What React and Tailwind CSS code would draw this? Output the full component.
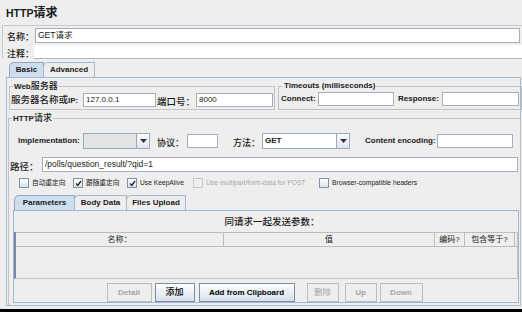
import React from 'react';

const FONT = "font-['Liberation_Sans','Noto_Sans_CJK_SC',sans-serif]";

const Cjk = ({ children, size = 'text-[9.5px]' }) => <span className={`${size} font-medium`}>{children}</span>;

const Field = ({ w, value, className = '' }) => (
  <div className={`h-[14px] shrink-0 border border-[#a3afbc] bg-white flex items-center pl-[2px] text-[8px] ${w} ${className}`}>
    {value}
  </div>
);

const Arrow = () => (
  <svg width="7" height="4" viewBox="0 0 7 4"><path d="M0 0h7L3.5 4z" fill="#333" /></svg>
);

const Combo = ({ w, value, disabled }) => (
  <div className={`h-[16px] shrink-0 flex border border-[#9aa9b8] ${w}`}>
    <div className={`flex-1 flex items-center pl-[2px] text-[8px] font-bold ${disabled ? 'bg-[#e3e3e3]' : 'bg-white'}`}>{value}</div>
    <div className="w-[13px] border-l border-[#9aa9b8] bg-gradient-to-b from-[#fafbfd] to-[#dfe6ee] flex items-center justify-center">
      <Arrow />
    </div>
  </div>
);

const Check = ({ checked, disabled, label, className = '' }) => (
  <div className={`flex items-center gap-[3px] shrink-0 ${className}`}>
    <div className={`w-[10px] h-[10px] border flex items-center justify-center ${disabled ? 'border-[#c4c9cf] bg-[#eeeeee]' : 'border-[#7f92a6] bg-gradient-to-b from-white to-[#d9e2ec]'}`}>
      {checked && (
        <svg width="7" height="7" viewBox="0 0 7 7"><path d="M1 3.5l1.8 2L6 1" stroke="#222" strokeWidth="1.3" fill="none" /></svg>
      )}
    </div>
    <span className={`text-[6.7px] ${disabled ? 'text-[#a8a8a8]' : 'text-[#222]'}`}>{label}</span>
  </div>
);

const Tab = ({ label, active, w }) => (
  <div
    className={`h-[15px] ${w} flex items-center justify-center text-[8px] font-bold border border-b-0 rounded-tl-[5px] -mr-px ${
      active ? 'bg-[#cfdeef] border-[#8fa7c4]' : 'bg-[#eeeeee] border-[#a7b6c8]'
    }`}
  >
    {label}
  </div>
);

const Btn = ({ label, w, disabled, className = '' }) => (
  <div
    className={`h-[19px] ${w} flex items-center justify-center text-[8px] font-bold border ${
      disabled
        ? 'border-[#b9bec4] text-[#a5a5a5] bg-[#eeeeee]'
        : 'border-[#7c8ea3] text-black bg-gradient-to-b from-white to-[#d5e0ec]'
    } ${className}`}
  >
    {label}
  </div>
);

export default function App() {
  return (
    <div className={`w-[522px] h-[312px] bg-[#eeeeee] overflow-hidden flex flex-col text-[#1a1a1a] whitespace-nowrap leading-none ${FONT}`}>
      {/* title */}
      <div className="h-[25px] pl-[6px] pt-[6px] font-bold text-[10.5px] leading-[14px]">
        HTTP<span className="text-[12px]">请求</span>
      </div>

      {/* name / comments */}
      <div className="ml-[2px] h-[34px] border-t border-l border-[#c9c9c9] pt-[1px] flex flex-col">
        <div className="h-[16px] flex items-center">
          <span className="w-[32px] pl-[4px]"><Cjk size="text-[9px]">名称：</Cjk></span>
          <Field w="flex-1 mr-[2px] h-[15px]" value={<span className="text-[8.5px]">GET<span className="text-[8.5px]">请求</span></span>} />
        </div>
        <div className="h-[16px] mt-[1px] flex items-center">
          <span className="w-[31px] pl-[4px]"><Cjk size="text-[9px]">注释：</Cjk></span>
          <div className="flex-1 h-[14px] bg-white border-b border-[#b5b5b5]" />
        </div>
      </div>

      {/* tabs */}
      <div className="mt-[3px] ml-[9px] flex">
        <Tab label="Basic" active w="w-[35px]" />
        <Tab label="Advanced" w="w-[52px]" />
      </div>

      <div className="ml-[6px] mr-[1px] h-[229px] border border-[#a4b9d3] flex flex-col px-[1px]">
        {/* top fieldsets */}
        <div className="mt-[3px] flex">
          <fieldset className="ml-[1px] w-[265px] h-[29px] border border-[#c2c2c2] px-[1px]">
            <legend className="ml-[2px] px-[1px] font-bold text-[8px] leading-[10px]">Web<Cjk size="text-[9px]">服务器</Cjk></legend>
            <div className="flex items-center h-[15px]">
              <span className="w-[72px] shrink-0 font-bold text-[8px]"><Cjk size="text-[9.5px]">服务器名称或</Cjk>IP:</span>
              <Field w="w-[73px]" value="127.0.0.1" />
              <span className="w-[40px] shrink-0 pl-[1px]"><Cjk size="text-[9.5px]">端口号：</Cjk></span>
              <Field w="w-[77px]" value="8000" />
            </div>
          </fieldset>
          <fieldset className="ml-[3px] w-[243px] h-[29px] border border-[#c2c2c2] px-[2px]">
            <legend className="ml-[2px] px-[1px] font-bold text-[8px] leading-[10px]">Timeouts (milliseconds)</legend>
            <div className="flex items-center h-[15px]">
              <span className="w-[37px] shrink-0 font-bold text-[8px]">Connect:</span>
              <Field w="w-[76px]" value="" />
              <span className="w-[48px] shrink-0 pl-[4px] font-bold text-[8px]">Response:</span>
              <Field w="w-[77px]" value="" />
            </div>
          </fieldset>
        </div>

        {/* HTTP request fieldset */}
        <fieldset className="mt-[3px] w-[512px] flex-1 border border-[#c2c2c2] border-b-0 px-[1px] flex flex-col">
          <legend className="ml-[2px] px-[1px] font-bold text-[8px] leading-[10px]">HTTP<Cjk size="text-[9px]">请求</Cjk></legend>

          <div className="mt-[9px] h-[16px] flex items-center">
            <span className="ml-[8px] w-[65px] shrink-0 font-bold text-[8px]">Implementation:</span>
            <Combo w="w-[67px]" value="" disabled />
            <span className="ml-[7px] w-[30px] shrink-0"><Cjk size="text-[9px]">协议：</Cjk></span>
            <Field w="w-[31px]" value="" />
            <span className="ml-[15px] w-[29px] shrink-0"><Cjk size="text-[9px]">方法：</Cjk></span>
            <Combo w="w-[88px]" value="GET" />
            <span className="ml-[15px] w-[72px] shrink-0 font-bold text-[8px]">Content encoding:</span>
            <Field w="w-[76px]" value="" />
          </div>

          <div className="mt-[8px] h-[15px] flex items-center">
            <span className="w-[32px] shrink-0"><Cjk size="text-[9.5px]">路径：</Cjk></span>
            <Field w="w-[476px] h-[15px]" value={<span className="text-[8.5px]">/polls/question_result/?qid=1</span>} />
          </div>

          <div className="mt-[5px] h-[12px] flex items-center">
            <Check label="自动重定向" className="ml-[9px] w-[54px]" />
            <Check label="跟随重定向" checked className="w-[54px]" />
            <Check label="Use KeepAlive" checked className="w-[66px]" />
            <Check label="Use multipart/form-data for POST" disabled className="w-[126px]" />
            <Check label="Browser-compatible headers" />
          </div>

          {/* inner tabs */}
          <div className="mt-[6px] ml-[4px] flex">
            <Tab label="Parameters" active w="w-[61px]" />
            <Tab label="Body Data" w="w-[53px]" />
            <Tab label="Files Upload" w="w-[60px]" />
          </div>
          <div className="ml-[3px] w-[506px] h-[93px] border border-[#a0b7d3] flex flex-col">
            <div className="h-[21px] pl-[12px] flex items-center justify-center">
              <Cjk size="text-[9.5px]">同请求一起发送参数：</Cjk>
            </div>
            <div className="h-[47px] border-l-2 border-[#7489a6] border-r border-r-[#c4c4c4] border-b border-b-[#c4c4c4] flex flex-col">
              <div className="h-[15px] flex border-y border-[#bdbdbd] text-[8px]">
                <div className="w-[208px] border-r border-[#bdbdbd] flex items-center justify-center">名称：</div>
                <div className="w-[211px] border-r border-[#bdbdbd] flex items-center justify-center">值</div>
                <div className="w-[30px] border-r border-[#bdbdbd] flex items-center justify-center">编码?</div>
                <div className="w-[50px] border-r border-[#bdbdbd] flex items-center justify-center">包含等于?</div>
              </div>
            </div>
            <div className="mt-[4px] flex justify-center pr-[3px]">
              <Btn label="Detail" w="w-[45px]" disabled />
              <Btn label={<Cjk size="text-[9px]">添加</Cjk>} w="w-[40px]" className="ml-[3px]" />
              <Btn label="Add from Clipboard" w="w-[96px]" className="ml-[4px]" />
              <Btn label={<span className="text-[8.5px] font-normal">删除</span>} w="w-[32px]" disabled className="ml-[12px]" />
              <Btn label="Up" w="w-[32px]" disabled className="ml-[6px]" />
              <Btn label="Down" w="w-[43px]" disabled className="ml-[3px]" />
            </div>
          </div>
        </fieldset>
      </div>

      <div className="mt-auto h-[3px] bg-black" />
    </div>
  );
}
